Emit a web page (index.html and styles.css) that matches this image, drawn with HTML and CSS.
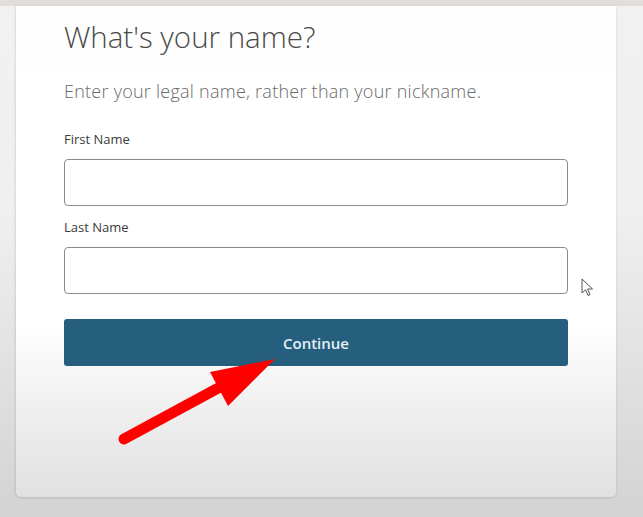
FILE: index.html
```html
<!DOCTYPE html>
<html lang="en">
<head>
    <meta charset="UTF-8">
    <meta name="viewport" content="width=device-width, initial-scale=1.0">
    <title>What's your name?</title>
    <link rel="stylesheet" href="styles.css">
</head>
<body>
    <div class="top-bar"></div>

    <!-- Name form card -->
    <div class="card">
        <h1>What's your name?</h1>
        <p class="intro">Enter your legal name, rather than your nickname.</p>

        <label for="firstName">First Name</label>
        <input type="text" id="firstName">

        <label for="lastName">Last Name</label>
        <input type="text" id="lastName">

        <button>Continue</button>
    </div>

    <!-- Red arrow pointing at the button -->
    <svg class="arrow" width="643" height="517" viewBox="0 0 643 517">
        <line x1="124" y1="439" x2="222" y2="386" stroke="#ff0000" stroke-width="11" stroke-linecap="round"/>
        <polygon points="275,359 210,372 228,406" fill="#ff0000"/>
    </svg>

    <!-- Mouse cursor -->
    <svg class="cursor" width="14" height="20" viewBox="0 0 14 20">
        <path d="M1 1 L1 15 L4.5 11.8 L7 17.5 L9 16.6 L6.6 11 L11.5 11 Z" fill="#fff" stroke="#555" stroke-width="1"/>
    </svg>
</body>
</html>
```

FILE: styles.css
```css
/* General Styles */
body {
    margin: 0;
    padding: 0;
    height: 517px;
    overflow: hidden;
    font-family: "Open Sans", Arial, sans-serif;
    background: linear-gradient(to bottom, #f1f1f1, #f0f0f0 40%, #d3d3d3);
    position: relative;
}

.top-bar {
    height: 6px;
    background: #e1ddd9;
}

.card {
    margin-left: 16px;
    width: 600px;
    height: 491px;
    box-sizing: border-box;
    padding: 13px 48px 0 48px;
    background: linear-gradient(to bottom, #fdfdfd, #ffffff 15%, #ffffff 65%, #f1f1f1 80%, #e1e1e1);
    border-radius: 0 0 5px 5px;
    box-shadow: 0 1px 3px rgba(0, 0, 0, 0.12), -1px 0 2px rgba(0, 0, 0, 0.05);
    display: flex;
    flex-direction: column;
}

h1 {
    margin: 0;
    font-size: 29.5px;
    font-weight: 300;
    color: #4a4a4a;
    line-height: 36px;
}

.intro {
    margin: 24px 0 0 0;
    font-size: 18px;
    letter-spacing: 0.25px;
    font-weight: 300;
    color: #6a6a6a;
    line-height: 24px;
}

label {
    margin-top: 27px;
    font-size: 13px;
    color: #3c3c3c;
    line-height: 18px;
}

label + input {
    margin-top: 11px;
}

input + label {
    margin-top: 12px;
}

input {
    width: 504px;
    height: 47px;
    box-sizing: border-box;
    border: 1px solid #8a8a8a;
    border-radius: 4px;
    background: #fff;
    font-size: 15px;
    padding: 0 12px;
}

button {
    margin-top: 25px;
    width: 504px;
    height: 47px;
    background: #265e7e;
    color: #e3f0f7;
    border: none;
    border-radius: 3px;
    font-family: "Open Sans", Arial, sans-serif;
    font-size: 15px;
    font-weight: 600;
    cursor: pointer;
}

.arrow {
    position: absolute;
    top: 0;
    left: 0;
    pointer-events: none;
}

.cursor {
    position: absolute;
    left: 581px;
    top: 278px;
}
```
